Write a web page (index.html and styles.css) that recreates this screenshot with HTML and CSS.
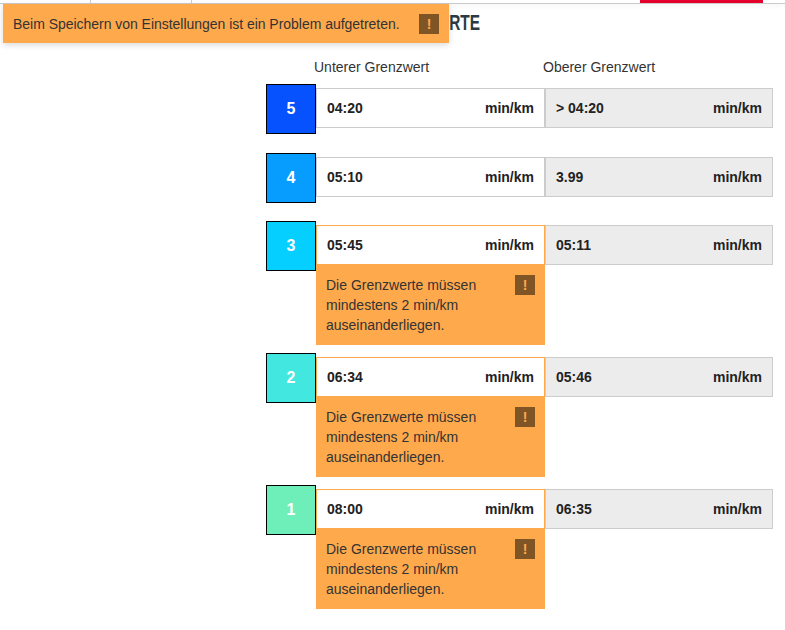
FILE: index.html
```html
<!DOCTYPE html>
<html lang="de">
<head>
  <meta charset="UTF-8">
  <meta name="viewport" content="width=device-width, initial-scale=1.0">
  <title>Grenzwerte</title>
  <link rel="stylesheet" href="styles.css">
</head>
<body>
<!--TOP NAV-->
  <div class="nav">
    <div class="nav-item nav-first"></div>
    <div class="nav-item nav-second"></div>
    <div class="nav-active"></div>
  </div>

<!--SAVE ERROR-->
  <div class="toast">
    <span class="toast-text">Beim Speichern von Einstellungen ist ein Problem aufgetreten.</span>
    <span class="warn">!</span>
  </div>

  <div class="content">
    <h1><span class="title">RTE</span></h1>

    <div class="labels">
      <span class="label-low">Unterer Grenzwert</span>
      <span class="label-high">Oberer Grenzwert</span>
    </div>

    <div class="zone">
      <div class="badge badge-5">5</div>
      <div class="low">
        <div class="field"><span>04:20</span><span>min/km</span></div>
      </div>
      <div class="field high"><span>&gt; 04:20</span><span>min/km</span></div>
    </div>

    <div class="zone">
      <div class="badge badge-4">4</div>
      <div class="low">
        <div class="field"><span>05:10</span><span>min/km</span></div>
      </div>
      <div class="field high"><span>3.99</span><span>min/km</span></div>
    </div>

    <div class="zone">
      <div class="badge badge-3">3</div>
      <div class="low has-error">
        <div class="field"><span>05:45</span><span>min/km</span></div>
        <div class="error">
          <p>Die Grenzwerte müssen mindestens 2 min/km auseinanderliegen.</p>
          <span class="warn">!</span>
        </div>
      </div>
      <div class="field high"><span>05:11</span><span>min/km</span></div>
    </div>

    <div class="zone">
      <div class="badge badge-2">2</div>
      <div class="low has-error">
        <div class="field"><span>06:34</span><span>min/km</span></div>
        <div class="error">
          <p>Die Grenzwerte müssen mindestens 2 min/km auseinanderliegen.</p>
          <span class="warn">!</span>
        </div>
      </div>
      <div class="field high"><span>05:46</span><span>min/km</span></div>
    </div>

    <div class="zone">
      <div class="badge badge-1">1</div>
      <div class="low has-error">
        <div class="field"><span>08:00</span><span>min/km</span></div>
        <div class="error">
          <p>Die Grenzwerte müssen mindestens 2 min/km auseinanderliegen.</p>
          <span class="warn">!</span>
        </div>
      </div>
      <div class="field high"><span>06:35</span><span>min/km</span></div>
    </div>
  </div>
</body>
</html>
```

FILE: styles.css
```css
body {
  margin: 0;
  background-color: white;
  color: #333;
  font-family: "Liberation Sans", Arial, sans-serif;
  font-size: 14px;
}
.nav {
  display: flex;
  height: 3px;
  border-bottom: 1px solid #ccc;
  box-shadow: 0 1px 6px rgba(0, 0, 0, 0.06);
}
.nav-item {
  border-right: 1px solid #ccc;
}
.nav-first {
  width: 90px;
}
.nav-second {
  width: 100px;
}
.nav-active {
  width: 123px;
  margin-left: 448px;
  background-color: #e4002b;
}
.toast {
  position: absolute;
  top: 4px;
  left: 3px;
  box-sizing: border-box;
  width: 446px;
  height: 39px;
  padding: 0 10px;
  display: flex;
  justify-content: space-between;
  align-items: center;
  background-color: #ffa94d;
  box-shadow: 0 2px 6px rgba(0, 0, 0, 0.15);
}
.toast-text {
  letter-spacing: -0.03px;
}
.warn {
  flex: none;
  width: 20px;
  height: 20px;
  background-color: #805525;
  color: #ffa94d;
  font-size: 14px;
  font-weight: bold;
  line-height: 20px;
  text-align: center;
}
.content {
  width: 507px;
  margin-left: 266px;
}
h1 {
  width: 214px;
  height: 20px;
  margin: 0;
  padding-top: 9px;
  color: #2b3a42;
  font-size: 22px;
  font-weight: bold;
  line-height: 20px;
  text-align: right;
}
.title {
  display: inline-block;
  transform: scaleX(0.7);
  transform-origin: right center;
}
.labels {
  display: flex;
  height: 16px;
  margin-top: 26px;
  margin-bottom: 9px;
  line-height: 16px;
}
.label-low {
  width: 229px;
  margin-left: 48px;
}
.zone {
  display: flex;
  align-items: flex-start;
  min-height: 60.5px;
  margin-bottom: 8px;
}
.badge {
  box-sizing: border-box;
  flex: none;
  width: 50px;
  height: 50px;
  border: 1px solid black;
  color: white;
  font-size: 16px;
  font-weight: bold;
  line-height: 48px;
  text-align: center;
}
.badge-5 {
  background-color: #0652ff;
}
.badge-4 {
  background-color: #069dff;
}
.badge-3 {
  background-color: #05cfff;
}
.badge-2 {
  background-color: #42e8e0;
}
.badge-1 {
  background-color: #6eeeb8;
}
.low {
  width: 229px;
  margin-top: 4px;
}
.field {
  box-sizing: border-box;
  height: 40px;
  padding: 0 10px;
  display: flex;
  justify-content: space-between;
  align-items: center;
  border: 1px solid #ccc;
  color: #222;
  font-weight: bold;
}
.high {
  width: 228px;
  margin-top: 4px;
  background-color: #ececec;
}
.has-error .field {
  border-color: #ffa94d;
}
.error {
  box-sizing: border-box;
  height: 80px;
  padding: 10px;
  display: flex;
  justify-content: space-between;
  align-items: flex-start;
  background-color: #ffa94d;
}
.error p {
  width: 170px;
  margin: 0;
  line-height: 20px;
}
```
